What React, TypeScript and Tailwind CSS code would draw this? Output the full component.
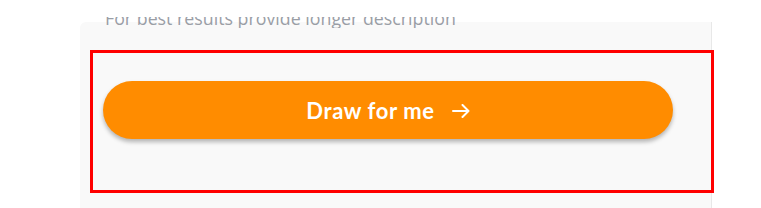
export default function App() {
  return (
    <div
      className="w-[761px] h-[208px] bg-white overflow-hidden"
      style={{ fontFamily: 'Lato, "Noto Sans", sans-serif' }}
    >
      {/* Hint text (clipped from the scrolled area above) */}
      <div className="pt-[17px] pl-[105px] h-[27px]">
        <div className="h-[11px] overflow-hidden">
          <p
            className="-mt-[9px] text-[17.8px] leading-[20px] text-[#9a9ea6] whitespace-nowrap"
            style={{ fontFamily: '"Open Sans", sans-serif' }}
          >
            For best results provide longer description
          </p>
        </div>
      </div>

      {/* Panel */}
      <div className="-mt-[5px] ml-[80px] w-[632px] h-[186px] bg-[#f9f9f9] border-r border-[#e8e8e8] rounded-tl-[6px] pt-[28px] pl-[10px]">
        <div className="w-[624px] h-[143px] border-[3px] border-[#ff0000] pt-[28px] pl-[10px]">
          <button
            type="button"
            className="w-[570px] h-[58px] rounded-full bg-[#ff8c00] shadow-[0_3px_4px_rgba(0,0,0,0.28)] flex items-center justify-center gap-[17px] text-white"
          >
            <span className="text-[22px] font-bold tracking-[0.6px]">Draw for me</span>
            <svg width="18" height="14" viewBox="0 0 18 14" fill="none" className="mt-[1px]">
              <path
                d="M1 7H16.5M10.5 1L16.5 7L10.5 13"
                stroke="white"
                strokeWidth="2"
                strokeLinecap="round"
                strokeLinejoin="round"
              />
            </svg>
          </button>
        </div>
      </div>
    </div>
  );
}
